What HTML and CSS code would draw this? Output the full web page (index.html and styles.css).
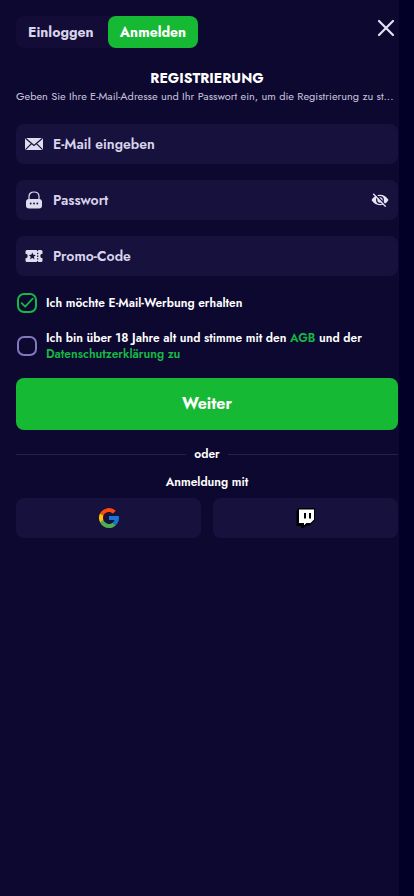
FILE: index.html
```html
<!DOCTYPE html>
<html lang="de">
<head>
<meta charset="utf-8">
<meta name="viewport" content="width=device-width, initial-scale=1">
<title>Registrierung</title>
<link rel="stylesheet" href="styles.css">
</head>
<body>
<main class="panel">
  <header class="top">
    <nav class="tabs">
      <button class="tab login">Einloggen</button>
      <button class="tab active">Anmelden</button>
    </nav>
    <button class="close" aria-label="Schließen">
      <svg width="18" height="18" viewBox="0 0 18 18"><path d="M2 2l14 14M16 2L2 16" fill="none" stroke="currentColor" stroke-width="2.200" stroke-linecap="round"/></svg>
    </button>
  </header>
  <h1 class="title">REGISTRIERUNG</h1>
  <p class="subtitle">Geben Sie Ihre E-Mail-Adresse und Ihr Passwort ein, um die Registrierung zu st...</p>
  <form class="form">
    <label class="field">
      <svg class="icon" width="18" height="18" viewBox="0 0 18 18"><rect y="3" width="18" height="12" rx="1" fill="#e0dcef"/><path d="M.5 3.300L9 10.500l8.500-7.200M.5 14.700l6-6M17.500 14.700l-6-6" fill="none" stroke="#18103e" stroke-width="1.200"/></svg>
      <span>E-Mail eingeben</span>
    </label>
    <label class="field">
      <svg class="icon" width="18" height="18" viewBox="0 0 18 18"><path d="M4 9V5.500C4 2.700 6 1 9 1s5 1.700 5 4.500V9" fill="none" stroke="#e0dcef" stroke-width="1.200"/><rect x="1" y="8" width="16" height="9.500" rx="3" fill="#e0dcef"/><g fill="#18103e"><circle cx="5.700" cy="12.500" r=".9"/><circle cx="9" cy="12.500" r=".9"/><circle cx="12.300" cy="12.500" r=".9"/></g></svg>
      <span>Passwort</span>
      <svg class="eye" width="18" height="14" viewBox="0 0 18 14"><path d="M.5 7C4.500 .1 13.500 .1 17.500 7c-4 6.900-13 6.900-17 0z" fill="#e8e4f4"/><circle cx="9" cy="7" r="3.300" fill="none" stroke="#18103e" stroke-width="1.300"/><path d="M3.300 0l12 13" stroke="#18103e" stroke-width="1.500"/><path d="M2.200 .7l12.500 13" stroke="#e8e4f4" stroke-width="1.300"/></svg>
    </label>
    <label class="field">
      <svg class="icon" width="18" height="18" viewBox="0 0 18 18"><path d="M2 3h9.500l1 1.200 1-1.200H16a1.500 1.500 0 0 1 1.500 1.500v2.300a2.200 2.200 0 0 0 0 4.400v2.300A1.500 1.500 0 0 1 16 15h-2.500l-1-1.200-1 1.200H2a1.500 1.500 0 0 1-1.500-1.500v-2.300a2.200 2.200 0 0 0 0-4.400V4.500A1.500 1.500 0 0 1 2 3z" fill="#e0dcef"/><path d="M7.300 5.500l1 2.300 2.500.2-1.900 1.700.6 2.500-2.200-1.300-2.200 1.300.6-2.500L3.800 8l2.500-.2z" fill="#18103e"/><path d="M12.700 5.800v1.500m0 1.200V10m0 1.200v1.300" stroke="#18103e" stroke-width="1.200"/></svg>
      <span>Promo-Code</span>
    </label>
    <label class="check ads">
      <svg width="20" height="20" viewBox="0 0 20 20"><rect x="1" y="1" width="18" height="18" rx="6" fill="none" stroke="#16b845" stroke-width="2"/><path d="M4.700 10.200l3.500 3.500 7.500-8" fill="none" stroke="#16b845" stroke-width="1.800" stroke-linecap="round" stroke-linejoin="round"/></svg>
      <span>Ich möchte E-Mail-Werbung erhalten</span>
    </label>
    <label class="check terms">
      <svg width="20" height="20" viewBox="0 0 20 20"><rect x="1" y="1" width="18" height="18" rx="6" fill="none" stroke="#8278be" stroke-width="2"/></svg>
      <span>Ich bin über 18 Jahre alt und stimme mit den <a>AGB</a> und der<br><a>Datenschutzerklärung zu</a></span>
    </label>
    <button class="submit" type="button">Weiter</button>
  </form>
  <div class="divider"><span>oder</span></div>
  <p class="with">Anmeldung mit</p>
  <div class="socials">
    <button class="social" aria-label="Google">
      <svg width="20" height="20" viewBox="0 0 20 20"><path fill="#1976d2" d="M19.800 8H10v4h5.650a6 6 0 0 1-2.050 2.800l3.100 2.600C18.800 15.500 20 13 20 10c0-.7-.1-1.350-.2-2z"/><path fill="#ff4a0b" d="M1.150 5.350l3.300 2.400A6 6 0 0 1 10 4c1.500 0 2.900.6 4 1.500l2.800-2.800A10 10 0 0 0 1.150 5.350z"/><path fill="#50ad51" d="M10 20c2.600 0 4.900-1 6.700-2.600l-3.100-2.600A6 6 0 0 1 4.400 12l-3.300 2.500A10 10 0 0 0 10 20z"/><path fill="#ffc107" d="M1.150 5.350a10 10 0 0 0 0 9.200L4.400 12a6 6 0 0 1 0-4.200z"/></svg>
    </button>
    <button class="social" aria-label="Twitch">
      <svg width="20" height="20" viewBox="0 0 20 20"><path fill="#000" d="M2.500 0H19v12l-6 6h-3l-2.500 2H5v-2H.5V3.500z"/><path fill="#fff" d="M3 1.500h15v10L14.500 15h-4L8 17.300V15H3z"/><path fill="#000" d="M8 5h2v5.500H8zm5 0h2v5.500h-2z"/></svg>
    </button>
  </div>
</main>
</body>
</html>
```
FILE: styles.css
```css
* { box-sizing: border-box; }
body { margin: 0; height: 896px; overflow: hidden; background: #020026; color: #fff; font-family: "Jost", "Lato", sans-serif; font-weight: 600; }
button { border: 0; margin: 0; padding: 0; font: inherit; color: inherit; background: none; }
svg { display: block; flex: none; }
.panel { width: 399px; height: 896px; padding: 16px 1px 0 16px; background: #0d0830; }
.top { display: flex; justify-content: space-between; height: 32px; }
.tabs { display: flex; width: 182px; height: 32px; border-radius: 8px; background: #120c37; }
.tab { width: 90px; height: 32px; border-radius: 8px; font-size: 14px; line-height: 32px; font-weight: 700; white-space: nowrap; }
.login { width: 92px; padding-left: 12px; text-align: left; color: #d9d4eb; }
.active { background: #16b934; }
.close { width: 18px; height: 18px; margin: 3px 3px 0 0; color: #e5e1f1; }
.title { margin: 20px 0 0; height: 20px; font-size: 14px; line-height: 20px; font-weight: 700; text-align: center; }
.subtitle { margin: 0; height: 18px; font-size: 11px; line-height: 17px; font-weight: 400; color: #c9c4dd; white-space: nowrap; }
.form { margin-top: 18px; }
.field { display: flex; align-items: center; height: 40px; margin-bottom: 16px; padding: 0 9px; border-radius: 8px; background: #17113d; font-size: 14px; color: #d9d4eb; }
.icon { margin-right: 10px; }
.eye { margin-left: auto; }
.check { display: flex; align-items: center; gap: 9px; padding-left: 1px; font-size: 12px; line-height: 16px; white-space: nowrap; }
.ads { height: 22px; }
.terms { height: 32px; margin-top: 16px; }
.check a { color: #16b845; }
.submit { display: block; width: 382px; height: 52px; margin-top: 16px; padding-bottom: 2px; border-radius: 8px; background: #16b934; font-size: 16px; font-weight: 700; }
.divider { display: flex; align-items: center; gap: 8px; height: 20px; margin-top: 14px; font-size: 12px; line-height: 18px; }
.divider::before, .divider::after { content: ""; flex: 1; height: 1px; background: #25204a; }
.with { margin: 8px 0; height: 18px; font-size: 12px; line-height: 20px; text-align: center; }
.socials { display: grid; grid-template-columns: 185px 185px; gap: 12px; }
.social { display: flex; align-items: center; justify-content: center; height: 40px; border-radius: 8px; background: #17113d; }
```
